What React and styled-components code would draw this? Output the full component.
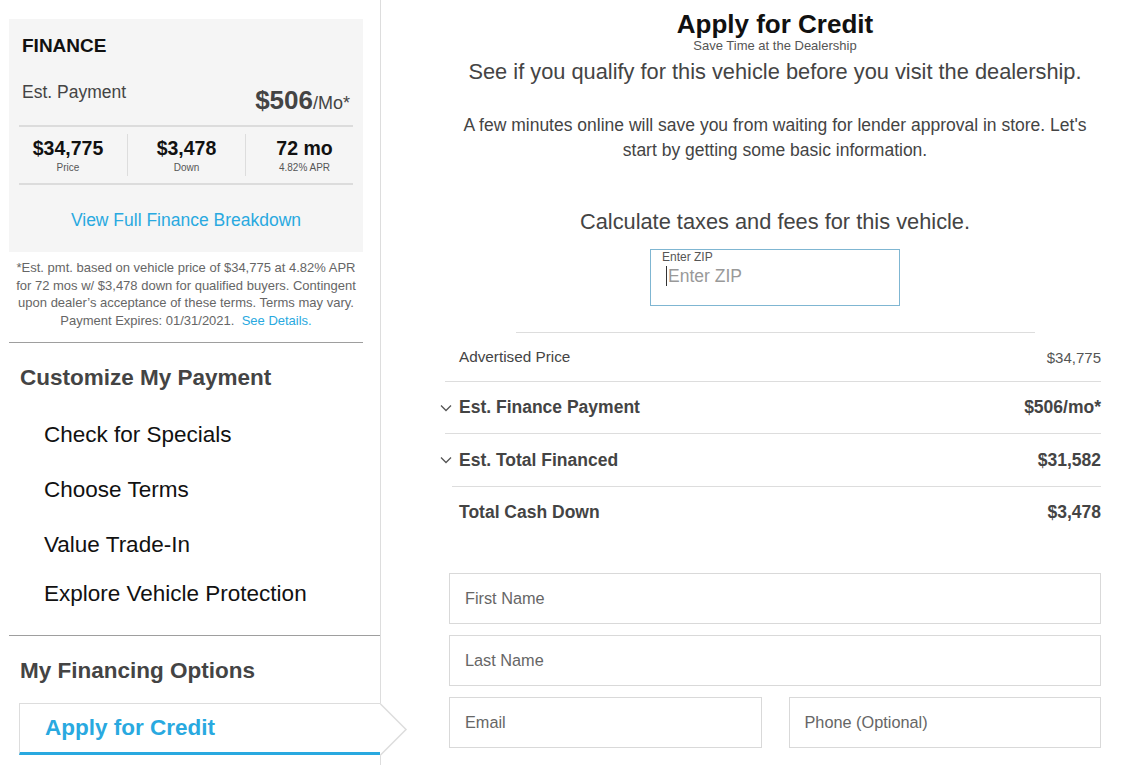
import React from "react";
import styled, { createGlobalStyle } from "styled-components";

const Global = createGlobalStyle`
  html, body { margin: 0; padding: 0; background: #fff; }
  body { font-family: "Liberation Sans", Arial, sans-serif; color: #444; }
  * { box-sizing: border-box; }
`;

const BLUE = "#29a9e0";

const Page = styled.div`
  display: flex;
  width: 1135px;
  min-height: 765px;
  overflow: hidden;
`;

/* ---------- Sidebar ---------- */
const Sidebar = styled.aside`
  width: 381px;
  flex-shrink: 0;
  border-right: 1px solid #ddd;
  padding: 19px 0 0 9px;
  position: relative;
`;

const Card = styled.section`
  width: 354px;
  height: 233px;
  background: #f5f5f5;
  padding: 0 10px;
  display: flex;
  flex-direction: column;
`;

const CardTitle = styled.div`
  font-weight: 700;
  font-size: 19px;
  line-height: 22px;
  color: #111;
  padding: 16px 3px 0;
`;

const PayRow = styled.div`
  display: flex;
  justify-content: space-between;
  align-items: flex-start;
  margin-top: 25px;
  padding: 0 3px;
`;

const PayLabel = styled.div`
  font-size: 17.5px;
  line-height: 20px;
  color: #444;
`;

const PayValue = styled.div`
  margin-top: 3px;
  line-height: 30px;
  color: #444;
  font-size: 18px;
  b { font-size: 26px; font-weight: 700; }
`;

const Rule = styled.div`
  height: 2px;
  background: #dcdcdc;
  margin-top: ${(p) => p.$top || 0}px;
`;

const Stats = styled.div`
  display: grid;
  grid-template-columns: repeat(3, 1fr);
  margin: 0 -10px;
  padding: 7px 0;
`;

const Stat = styled.div`
  display: flex;
  flex-direction: column;
  align-items: center;
  padding: 3px 0 2px;
  & + & { border-left: 1px solid #ddd; }
`;

const StatNum = styled.div`
  font-size: 19.5px;
  font-weight: 700;
  line-height: 22px;
  color: #111;
`;

const StatLabel = styled.div`
  font-size: 10px;
  line-height: 12px;
  margin-top: 3px;
  color: #555;
`;

const CardLink = styled.a`
  display: block;
  margin-top: 25px;
  text-align: center;
  font-size: 17.5px;
  line-height: 20px;
  color: ${BLUE};
  text-decoration: none;
`;

const Disclaimer = styled.p`
  width: 354px;
  margin: 7px 0 0;
  text-align: center;
  font-size: 13px;
  line-height: 17.7px;
  color: #666;
  a { color: ${BLUE}; text-decoration: none; }
`;

const Divider = styled.hr`
  border: 0;
  height: 1px;
  background: #9e9e9e;
  margin: ${(p) => p.$top}px 0 0;
  width: ${(p) => p.$width}px;
`;

const SectionTitle = styled.h2`
  margin: 21px 0 0;
  padding-left: 11px;
  font-size: 22.5px;
  line-height: 28px;
  font-weight: 700;
  color: #444;
`;

const Menu = styled.ul`
  list-style: none;
  margin: 0;
  padding: 0 0 0 35px;
`;

const MenuItem = styled.li`
  margin-top: ${(p) => p.$top}px;
  font-size: 22.5px;
  line-height: 26px;
  color: #111;
`;

const ActiveTab = styled.div`
  position: relative;
  margin: 18px 0 0 10px;
  height: 52px;
  border-top: 1px solid #ddd;
  border-left: 1px solid #ddd;
  border-bottom: 3px solid ${BLUE};
  display: flex;
  align-items: center;
  padding-left: 25px;
  font-size: 22.5px;
  font-weight: 700;
  color: ${BLUE};
`;

const TabArrow = styled.svg`
  position: absolute;
  top: -1px;
  right: -28px;
  width: 28px;
  height: 53px;
`;

/* ---------- Main ---------- */
const Main = styled.main`
  flex: 1;
  padding: 0 34px 0 68px;
  display: flex;
  flex-direction: column;
`;

const Title = styled.h1`
  margin: 9px 0 0;
  text-align: center;
  font-size: 26px;
  line-height: 30px;
  font-weight: 700;
  color: #111;
`;

const Subtitle = styled.div`
  text-align: center;
  font-size: 13px;
  line-height: 14px;
  color: #555;
`;

const Lead = styled.div`
  margin-top: ${(p) => p.$top}px;
  text-align: center;
  font-size: 21.8px;
  line-height: 24px;
  color: #444;
`;

const Para = styled.p`
  margin: 29px 0 0;
  text-align: center;
  font-size: 17.5px;
  line-height: 25px;
  color: #444;
`;

const ZipBox = styled.div`
  align-self: center;
  margin-top: 15px;
  width: 250px;
  height: 57px;
  border: 1px solid #7fb6d2;
  padding: 0 0 0 11px;
`;

const ZipLabel = styled.div`
  font-size: 12px;
  line-height: 14px;
  color: #555;
`;

const ZipValue = styled.div`
  display: flex;
  align-items: center;
  margin-top: 2px;
  padding-left: 4px;
  font-size: 17.5px;
  line-height: 20px;
  color: #999;
`;

const Caret = styled.span`
  width: 1px;
  height: 20px;
  background: #333;
  margin-right: 1px;
`;

const ShortRule = styled.div`
  align-self: center;
  width: 519px;
  height: 1px;
  background: #ddd;
  margin-top: 26px;
`;

const Table = styled.div`
  margin-left: -4px;
  width: 656px;
`;

const Row = styled.div`
  display: flex;
  align-items: center;
  justify-content: space-between;
  height: ${(p) => p.$h}px;
  margin-left: ${(p) => p.$indent || 0}px;
  padding-left: ${(p) => 14 - (p.$indent || 0)}px;
  border-bottom: ${(p) => (p.$last ? "0" : "1px solid #ddd")};
  box-sizing: content-box;
`;

const RowLabel = styled.div`
  display: flex;
  align-items: center;
  font-size: ${(p) => (p.$bold ? "17.5px" : "15.3px")};
  font-weight: ${(p) => (p.$bold ? 700 : 400)};
  color: #444;
`;

const RowValue = styled.div`
  font-size: ${(p) => (p.$bold ? "17.5px" : "15px")};
  font-weight: ${(p) => (p.$bold ? 700 : 400)};
  color: ${(p) => (p.$bold ? "#444" : "#555")};
`;

const Chevron = styled.svg`
  width: 12px;
  height: 8px;
  margin-left: -19px;
  margin-right: 7px;
`;

const Form = styled.form`
  margin-top: 36px;
  display: grid;
  grid-template-columns: 1fr 1fr;
  column-gap: 27px;
  row-gap: 11px;
`;

const Input = styled.input`
  grid-column: ${(p) => (p.$full ? "1 / -1" : "auto")};
  height: 51px;
  width: 100%;
  border: 1px solid #d9d9d9;
  padding: 0 15px;
  font-family: "Liberation Sans", Arial, sans-serif;
  font-size: 16.3px;
  color: #333;
  outline: none;
  &::placeholder { color: #666; }
`;

const Down = () => (
  <Chevron viewBox="0 0 12 8">
    <polyline points="1,1.5 6,6.5 11,1.5" fill="none" stroke="#555" strokeWidth="1.3" />
  </Chevron>
);

export default function App() {
  return (
    <>
      <Global />
      <Page>
        <Sidebar>
          <Card>
            <CardTitle>FINANCE</CardTitle>
            <PayRow>
              <PayLabel>Est. Payment</PayLabel>
              <PayValue>
                <b>$506</b>/Mo*
              </PayValue>
            </PayRow>
            <Rule $top={7} />
            <Stats>
              <Stat>
                <StatNum>$34,775</StatNum>
                <StatLabel>Price</StatLabel>
              </Stat>
              <Stat>
                <StatNum>$3,478</StatNum>
                <StatLabel>Down</StatLabel>
              </Stat>
              <Stat>
                <StatNum>72 mo</StatNum>
                <StatLabel>4.82% APR</StatLabel>
              </Stat>
            </Stats>
            <Rule />
            <CardLink href="#">View Full Finance Breakdown</CardLink>
          </Card>
          <Disclaimer>
            *Est. pmt. based on vehicle price of $34,775 at 4.82% APR
            <br />
            for 72 mos w/ $3,478 down for qualified buyers. Contingent
            <br />
            upon dealer’s acceptance of these terms. Terms may vary.
            <br />
            Payment Expires: 01/31/2021.&nbsp; <a href="#">See Details.</a>
          </Disclaimer>
          <Divider $top={12} $width={354} />
          <SectionTitle>Customize My Payment</SectionTitle>
          <Menu>
            <MenuItem $top={30}>Check for Specials</MenuItem>
            <MenuItem $top={29}>Choose Terms</MenuItem>
            <MenuItem $top={29}>Value Trade-In</MenuItem>
            <MenuItem $top={23}>Explore Vehicle Protection</MenuItem>
          </Menu>
          <Divider $top={28} $width={371} />
          <SectionTitle>My Financing Options</SectionTitle>
          <ActiveTab>
            Apply for Credit
            <TabArrow viewBox="0 0 28 53">
              <polygon points="0,0 26,26.5 0,53" fill="#fff" />
              <polyline points="0,0.5 26,26.5 0,52.5" fill="none" stroke="#ddd" strokeWidth="1.5" />
            </TabArrow>
          </ActiveTab>
        </Sidebar>

        <Main>
          <Title>Apply for Credit</Title>
          <Subtitle>Save Time at the Dealership</Subtitle>
          <Lead $top={7}>See if you qualify for this vehicle before you visit the dealership.</Lead>
          <Para>
            A few minutes online will save you from waiting for lender approval in store. Let's
            <br />
            start by getting some basic information.
          </Para>
          <Lead $top={47}>Calculate taxes and fees for this vehicle.</Lead>
          <ZipBox>
            <ZipLabel>Enter ZIP</ZipLabel>
            <ZipValue>
              <Caret />
              Enter ZIP
            </ZipValue>
          </ZipBox>
          <ShortRule />
          <Table>
            <Row $h={48}>
              <RowLabel>Advertised Price</RowLabel>
              <RowValue>$34,775</RowValue>
            </Row>
            <Row $h={51}>
              <RowLabel $bold>
                <Down />
                Est. Finance Payment
              </RowLabel>
              <RowValue $bold>$506/mo*</RowValue>
            </Row>
            <Row $h={52} $indent={7}>
              <RowLabel $bold>
                <Down />
                Est. Total Financed
              </RowLabel>
              <RowValue $bold>$31,582</RowValue>
            </Row>
            <Row $h={50} $last>
              <RowLabel $bold>Total Cash Down</RowLabel>
              <RowValue $bold>$3,478</RowValue>
            </Row>
          </Table>
          <Form onSubmit={(e) => e.preventDefault()}>
            <Input $full placeholder="First Name" />
            <Input $full placeholder="Last Name" />
            <Input placeholder="Email" />
            <Input placeholder="Phone (Optional)" />
          </Form>
        </Main>
      </Page>
    </>
  );
}
